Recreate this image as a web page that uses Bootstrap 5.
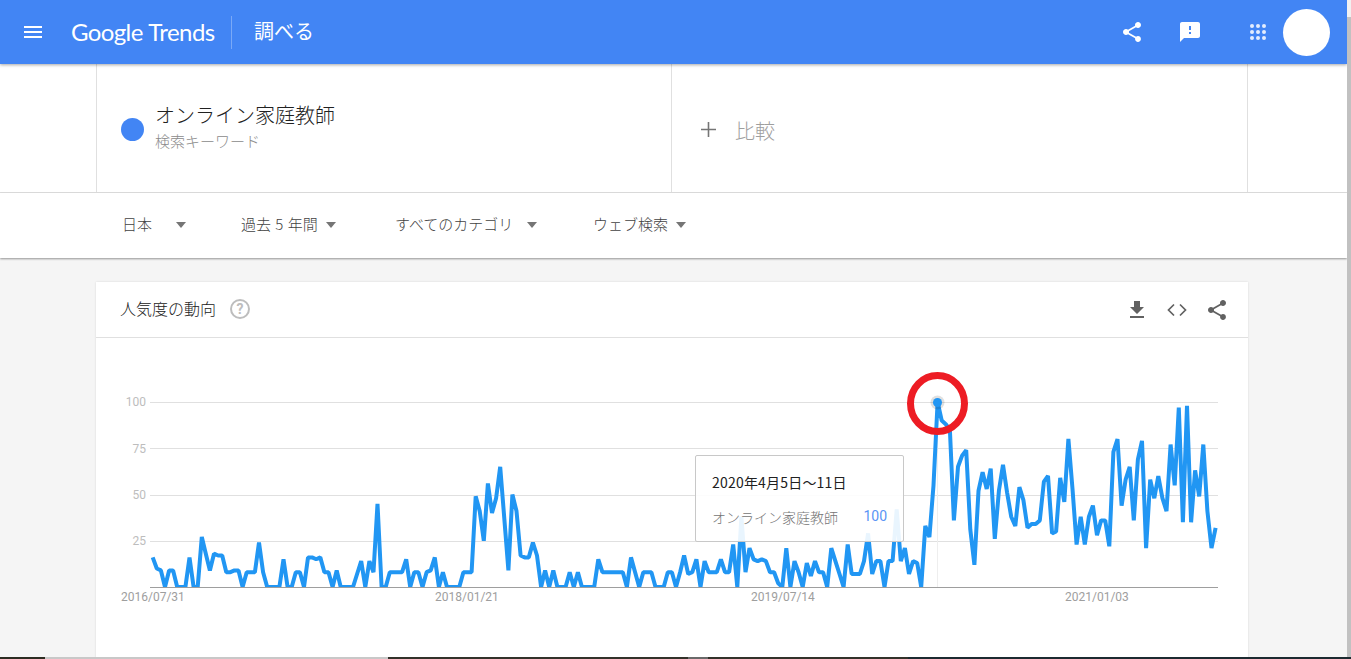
<!DOCTYPE html>
<html lang="ja">
<head>
    <meta charset="UTF-8">
    <title>Google Trends</title>
    <link href="https://cdn.jsdelivr.net/npm/bootstrap@5.3.0/dist/css/bootstrap.min.css" rel="stylesheet">
    <style>
        body { font-family: "Noto Sans CJK JP", "Liberation Sans", sans-serif; background: #f5f5f5; color: #212121; height: 659px; }
        .gt-scroll { width: 4px; background: linear-gradient(#f1f1f1 17px, #c1c1c1 17px); }
        .gt-page { height: 657px; }
        .gt-top { height: 64px; background: #4285f4; box-shadow: 0 1px 3px rgba(0,0,0,.35); position: relative; z-index: 2; }
        .gt-burger { margin-left: 21px; margin-right: 27px; }
        .gt-logo { font-family: Lato, sans-serif; font-size: 24px; letter-spacing: -.6px; width: 159px; margin-left: -1px; padding-left: 0; margin-right: 1px; }
        .gt-logo span { font-weight: 400; letter-spacing: -.55px; }
        .gt-logo-rule { width: 1px; height: 33px; background: #7aa9f7; }
        .gt-explore { font-size: 20px; font-weight: 400; margin: -2px 0 0 22px; }
        .gt-ico-share { margin-right: 34px; }
        .gt-ico-feed { margin-right: 44px; }
        .gt-apps { margin-right: 13px; }
        .gt-avatar { width: 47px; height: 47px; margin-right: 17px; }
        .gt-terms { height: 129px; padding: 0 98px 0 96px; border-bottom: 1px solid #e0e0e0; }
        .gt-term { width: 575px; border-left: 1px solid #e0e0e0; padding-top: 3px; }
        .gt-term-add { width: 577px; border-left: 1px solid #e0e0e0; border-right: 1px solid #e0e0e0; padding: 3px 0 0 28px; color: #9e9e9e; font-size: 20px; font-weight: 300; }
        .gt-dot { width: 23px; height: 23px; background: #4285f4; margin-left: 24px; margin-right: 11px; }
        .gt-term-name { font-size: 20px; font-weight: 300; line-height: 26px; color: #212121; margin-top: -5px; }
        .gt-term-kind { font-size: 15px; font-weight: 300; line-height: 23px; padding-top: 1px; color: #8a8a8a; }
        .gt-plus { margin-right: 18px; }
        .gt-compare { margin-top: 2px; }
        .gt-filters { height: 65px; padding: 0 0 2px 122px; font-size: 15px; font-weight: 300; color: #424242; box-shadow: 0 1px 2px rgba(0,0,0,.4); position: relative; z-index: 1; }
        .gt-tri { width: 0; height: 0; border-left: 5.5px solid transparent; border-right: 5.5px solid transparent; border-top: 6px solid #757575; }
        .gt-f1 { width: 119px; }
        .gt-f1 .gt-tri { margin-left: 24px; }
        .gt-f2 { width: 154px; word-spacing: 1px; }
        .gt-f2 .gt-tri, .gt-f4 .gt-tri { margin-left: 8px; }
        .gt-f3 { width: 198px; }
        .gt-f3 .gt-tri { margin-left: 14px; }
        .gt-panel { width: 1152px; margin: 24px 0 0 96px; box-shadow: 0 0 2px rgba(0,0,0,.12); }
        .gt-panel-head { height: 56px; padding: 0 19px 0 24px; border-bottom: 1px solid #e0e0e0; }
        .gt-panel-title { font-size: 16px; font-weight: 300; color: #212121; margin: -3px 14px 0 0; }
        .gt-help { width: 20px; height: 20px; margin-top: -2px; border: 2px solid #bdbdbd; color: #bdbdbd; font-family: Roboto, sans-serif; font-size: 14px; font-weight: 700; line-height: 1; }
        .gt-tools { gap: 16px; }
        .gt-chart { height: 320px; }
        .gt-chart svg { display: block; }
        .gt-y { font: 12px Roboto, sans-serif; fill: #bdbdbd; text-anchor: end; }
        .gt-x { font: 12px Roboto, sans-serif; fill: #9e9e9e; }
        .gt-tip { position: absolute; left: 599px; top: 117px; width: 209px; height: 87px; background: rgba(255,255,255,.9); border: 1px solid #c8c8c8; border-radius: 2px; padding: 0 16px; }
        .gt-tip-date { font-size: 14px; font-weight: 400; letter-spacing: .2px; color: #212121; margin-top: 16px; line-height: 20px; white-space: nowrap; }
        .gt-tip-name { font-size: 14px; font-weight: 300; color: #757575; }
        .gt-tip-val { font: 14px Roboto, sans-serif; color: #5a95f5; margin-top: 1px; }
        .gt-tip-row { margin-top: 15px; line-height: 20px; }
        .gt-task { height: 2px; }
        .gt-t1 { width: 45px; background: #2c2c22; }
        .gt-t2 { width: 343px; background: #c8c8c8; }
        .gt-t3 { width: 300px; background: #33322a; }
        .gt-t4 { width: 20px; background: #6a6a6a; }
        .gt-t5 { width: 200px; background: #33322a; }
        .gt-t6 { background: #1c2a30; }
    </style>
</head>
<body class="d-flex flex-column overflow-hidden">
    <div class="d-flex overflow-hidden">
        <div class="gt-page flex-grow-1 overflow-hidden">
            <header class="gt-top d-flex align-items-center text-white">
                <svg class="gt-burger" width="24" height="24" viewBox="0 0 24 24" fill="#fff"><path d="M3 18h18v-2H3v2zm0-5h18v-2H3v2zm0-7v2h18V6H3z"/></svg>
                <div class="gt-logo">Google <span>Trends</span></div>
                <div class="gt-logo-rule"></div>
                <div class="gt-explore">調べる</div>
                <div class="ms-auto d-flex align-items-center">
                    <svg class="gt-ico-share" width="24" height="24" viewBox="0 0 24 24" fill="#fff"><path d="M18 16.08c-.76 0-1.44.3-1.96.77L8.91 12.7c.05-.23.09-.46.09-.7s-.04-.47-.09-.7l7.05-4.11c.54.5 1.25.81 2.04.81 1.66 0 3-1.34 3-3s-1.34-3-3-3-3 1.34-3 3c0 .24.04.47.09.7L8.04 9.81C7.5 9.31 6.79 9 6 9c-1.66 0-3 1.34-3 3s1.34 3 3 3c.79 0 1.5-.31 2.04-.81l7.12 4.16c-.05.21-.08.43-.08.65 0 1.61 1.31 2.92 2.92 2.92 1.61 0 2.92-1.31 2.92-2.92s-1.31-2.92-2.92-2.92z"/></svg>
                    <svg class="gt-ico-feed" width="24" height="24" viewBox="0 0 24 24" fill="#fff"><path d="M20 2H4c-1.1 0-1.99.9-1.99 2L2 22l4-4h14c1.1 0 2-.9 2-2V4c0-1.1-.9-2-2-2zm-7 12h-2v-2h2v2zm0-4h-2V6h2v4z"/></svg>
                    <svg class="gt-apps" width="24" height="24" viewBox="0 0 24 24" fill="#e3edfd"><circle cx="6" cy="6" r="2"/><circle cx="12" cy="6" r="2"/><circle cx="18" cy="6" r="2"/><circle cx="6" cy="12" r="2"/><circle cx="12" cy="12" r="2"/><circle cx="18" cy="12" r="2"/><circle cx="6" cy="18" r="2"/><circle cx="12" cy="18" r="2"/><circle cx="18" cy="18" r="2"/></svg>
                    <div class="gt-avatar rounded-circle bg-white"></div>
                </div>
            </header>

            <section class="gt-terms d-flex bg-white">
                <div class="gt-term d-flex align-items-center">
                    <div class="gt-dot rounded-circle"></div>
                    <div>
                        <div class="gt-term-name">オンライン家庭教師</div>
                        <div class="gt-term-kind">検索キーワード</div>
                    </div>
                </div>
                <div class="gt-term-add d-flex align-items-center">
                    <svg class="gt-plus" width="17" height="17" viewBox="0 0 17 17" stroke="#757575" stroke-width="1.6"><path d="M8.5 1v15M1 8.5h15"/></svg>
                    <span class="gt-compare">比較</span>
                </div>
            </section>

            <section class="gt-filters d-flex align-items-center bg-white">
                <div class="gt-f1 d-flex align-items-center"><span>日本</span><i class="gt-tri"></i></div>
                <div class="gt-f2 d-flex align-items-center"><span>過去 5 年間</span><i class="gt-tri"></i></div>
                <div class="gt-f3 d-flex align-items-center"><span>すべてのカテゴリ</span><i class="gt-tri"></i></div>
                <div class="gt-f4 d-flex align-items-center"><span>ウェブ検索</span><i class="gt-tri"></i></div>
            </section>

            <section class="gt-panel bg-white">
                <div class="gt-panel-head d-flex align-items-center">
                    <span class="gt-panel-title">人気度の動向</span>
                    <span class="gt-help rounded-circle d-flex align-items-center justify-content-center">?</span>
                    <div class="gt-tools ms-auto d-flex align-items-center">
                        <svg width="24" height="24" viewBox="0 0 24 24" fill="#616161"><path d="M19 9h-4V3H9v6H5l7 7 7-7zM5 18v2h14v-2H5z"/></svg>
                        <svg width="24" height="24" viewBox="0 0 24 24" fill="none" stroke="#616161" stroke-width="1.7"><path d="M9 6.5L3.5 12 9 17.5M15 6.5l5.500 5.500-5.500 5.500"/></svg>
                        <svg width="24" height="24" viewBox="0 0 24 24" fill="#616161"><path d="M18 16.08c-.76 0-1.44.3-1.96.77L8.91 12.7c.05-.23.09-.46.09-.7s-.04-.47-.09-.7l7.05-4.11c.54.5 1.25.81 2.04.81 1.66 0 3-1.34 3-3s-1.34-3-3-3-3 1.34-3 3c0 .24.04.47.09.7L8.04 9.81C7.5 9.31 6.79 9 6 9c-1.66 0-3 1.34-3 3s1.34 3 3 3c.79 0 1.5-.31 2.04-.81l7.12 4.16c-.05.21-.08.43-.08.65 0 1.61 1.31 2.92 2.92 2.92 1.61 0 2.92-1.31 2.92-2.92s-1.31-2.92-2.92-2.92z"/></svg>
                    </div>
                </div>
                <div class="gt-chart position-relative">
                    <!-- viewBox keeps page coordinates so the chart numbers read like the screenshot -->
                    <svg width="1152" height="320" viewBox="96 338 1152 320">
                        <defs><clipPath id="plot"><rect x="146" y="380" width="1074" height="207"/></clipPath></defs>
                        <g stroke="#e0e0e0" stroke-width="1">
                            <path d="M150 402.500H1218M150 448.500H1218M150 495.500H1218M150 541.500H1218"/>
                        </g>
                        <path d="M937.500 402V587" stroke="#eee" stroke-width="1"/>
                        <text class="gt-y" x="146" y="406">100</text>
                        <text class="gt-y" x="146" y="453">75</text>
                        <text class="gt-y" x="146" y="499">50</text>
                        <text class="gt-y" x="146" y="545">25</text>
                        <polyline id="trend" clip-path="url(#plot)" fill="none" stroke="#2196f3" stroke-width="4" stroke-linejoin="bevel"/>
                        <path d="M150 587.500H1218" stroke="#9e9e9e" stroke-width="1"/>
                        <text class="gt-x" x="121" y="601">2016/07/31</text>
                        <text class="gt-x" x="435" y="601">2018/01/21</text>
                        <text class="gt-x" x="751" y="601">2019/07/14</text>
                        <text class="gt-x" x="1065" y="601">2021/01/03</text>
                        <circle cx="937.500" cy="402.500" r="7" fill="#000" opacity=".12"/>
                        <circle cx="937.500" cy="402.500" r="4.500" fill="#2196f3"/>
                        <ellipse cx="937.500" cy="403.500" rx="27" ry="28" fill="none" stroke="#ed1c24" stroke-width="7"/>
                    </svg>
                    <div class="gt-tip">
                        <div class="gt-tip-date">2020年4月5日～11日</div>
                        <div class="gt-tip-row d-flex justify-content-between">
                            <span class="gt-tip-name">オンライン家庭教師</span>
                            <span class="gt-tip-val">100</span>
                        </div>
                    </div>
                </div>
            </section>
        </div>
        <div class="gt-scroll"></div>
    </div>
    <div class="gt-task d-flex">
        <div class="gt-t1"></div><div class="gt-t2"></div><div class="gt-t3"></div><div class="gt-t4"></div><div class="gt-t5"></div><div class="gt-t6 flex-grow-1"></div>
    </div>

    <script>
        // weekly values, read off the reference
        const values = [16,10,9,0,9,9,0,0,0,16,0,0,27,18,9,18,17,17,8,8,9,9,0,8,8,8,24,8,0,0,0,0,15,0,0,8,8,0,16,16,15,16,8,8,0,9,0,0,0,0,7,14,0,14,8,45,0,0,8,8,8,8,15,0,8,8,0,8,9,16,0,8,0,0,0,0,8,8,8,49,41,25,56,40,48,65,
            37,9,50,41,17,16,16,24,17,0,9,0,9,0,0,0,8,0,8,0,0,0,0,15,8,8,8,8,8,8,0,16,8,0,8,8,8,0,0,0,8,8,0,8,17,7,8,15,0,14,8,8,8,15,8,8,23,0,38,8,21,15,14,15,14,8,8,2,0,21,0,14,8,0,13,6,14,8,8,0,21,14,7,0,23,7,7,7,14,29,
            7,14,14,0,14,14,42,14,21,7,14,13,0,33,27,55,100,90,88,85,36,65,71,74,31,12,52,62,53,64,26,52,66,51,38,33,54,47,32,34,34,36,57,60,29,30,59,46,80,53,23,38,23,38,44,28,36,36,22,73,80,44,58,65,36,69,79,21,58,48,60,48,41,77,55,97,35,98,35,63,49,77,41,21,32];
        const pts = values.map((v, i) => (152.7 + i * 4.088).toFixed(1) + ',' + (587 - v * 1.85).toFixed(1));
        document.getElementById('trend').setAttribute('points', pts.join(' '));
    </script>
    <script src="https://cdn.jsdelivr.net/npm/bootstrap@5.3.0/dist/js/bootstrap.bundle.min.js"></script>
</body>
</html>
